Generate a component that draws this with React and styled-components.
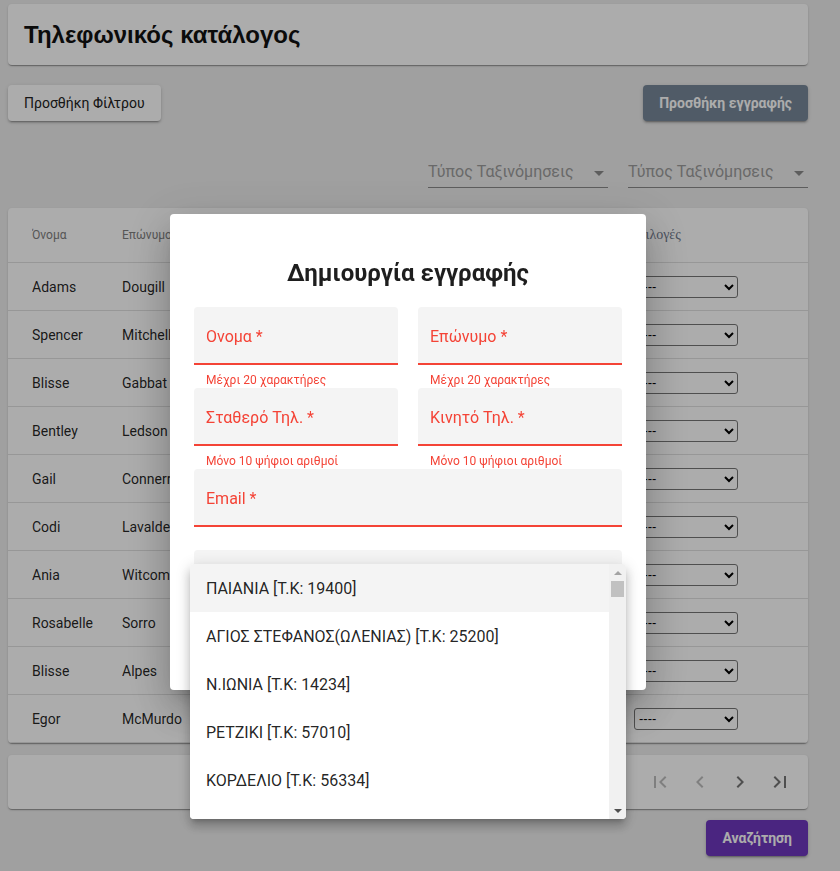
import React from "react";
import styled, { createGlobalStyle } from "styled-components";
import {
  MdArrowDropDown,
  MdFirstPage,
  MdChevronLeft,
  MdChevronRight,
  MdLastPage,
} from "react-icons/md";

const rows = [
  ["Adams", "Dougill", "2101234567", "6971234567", "adougill@mail.gr"],
  ["Spencer", "Mitchell", "2102345678", "6972345678", "smitch@mail.gr"],
  ["Blisse", "Gabbat", "2103456789", "6973456789", "bgabbat@mail.gr"],
  ["Bentley", "Ledson", "2104567890", "6974567890", "bledson@mail.gr"],
  ["Gail", "Connerr", "2105678901", "6975678901", "gconn@mail.gr"],
  ["Codi", "Lavalde", "2106789012", "6976789012", "clav@mail.gr"],
  ["Ania", "Witcombe", "2107890123", "6977890123", "awit@mail.gr"],
  ["Rosabelle", "Sorro", "2108901234", "6978901234", "rsorro@mail.gr"],
  ["Blisse", "Alpes", "2109012345", "6979012345", "balpes@mail.gr"],
  ["Egor", "McMurdo", "2100123456", "6970123456", "emcm@mail.gr"],
];

const places = [
  "ΠΑΙΑΝΙΑ [Τ.Κ: 19400]",
  "ΑΓΙΟΣ ΣΤΕΦΑΝΟΣ(ΩΛΕΝΙΑΣ) [Τ.Κ: 25200]",
  "Ν.ΙΩΝΙΑ [Τ.Κ: 14234]",
  "ΡΕΤΖΙΚΙ [Τ.Κ: 57010]",
  "ΚΟΡΔΕΛΙΟ [Τ.Κ: 56334]",
  "ΚΑΛΑΜΑΡΙΑ [Τ.Κ: 55131]",
  "ΠΕΙΡΑΙΑΣ [Τ.Κ: 18531]",
];

export default function App() {
  return (
    <>
      <GlobalStyle />
      <Page>
        <HeaderCard>
          <Title>Τηλεφωνικός κατάλογος</Title>
        </HeaderCard>

        <Toolbar>
          <Button $variant="light">Προσθήκη Φίλτρου</Button>
          <Button $variant="dark">Προσθήκη εγγραφής</Button>
        </Toolbar>

        <SortRow>
          <SortSelect>
            <select defaultValue="">
              <option value="">Τύπος Ταξινόμησεις</option>
            </select>
            <MdArrowDropDown size={24} />
          </SortSelect>
          <SortSelect>
            <select defaultValue="">
              <option value="">Τύπος Ταξινόμησεις</option>
            </select>
            <MdArrowDropDown size={24} />
          </SortSelect>
        </SortRow>

        <TableCard>
          <HeadRow>
            <HeadCell>Όνομα</HeadCell>
            <HeadCell>Επώνυμο</HeadCell>
            <HeadCell>Σταθερό</HeadCell>
            <HeadCell>Κινητό</HeadCell>
            <HeadCell>Email</HeadCell>
            <HeadCell $serif>Επιλογές</HeadCell>
          </HeadRow>
          {rows.map((r, i) => (
            <Row key={i}>
              <Cell>{r[0]}</Cell>
              <Cell>{r[1]}</Cell>
              <Cell>{r[2]}</Cell>
              <Cell>{r[3]}</Cell>
              <Cell>{r[4]}</Cell>
              <Cell>
                <RowSelect defaultValue="">
                  <option value="">----</option>
                  <option>Επεξεργασία</option>
                  <option>Διαγραφή</option>
                </RowSelect>
              </Cell>
            </Row>
          ))}
        </TableCard>

        <PagerCard>
          <PagerButton $disabled><MdFirstPage size={24} /></PagerButton>
          <PagerButton $disabled><MdChevronLeft size={24} /></PagerButton>
          <PagerButton><MdChevronRight size={24} /></PagerButton>
          <PagerButton><MdLastPage size={24} /></PagerButton>
        </PagerCard>

        <Footer>
          <Button $variant="purple">Αναζήτηση</Button>
        </Footer>
      </Page>

      <Backdrop />

      <Modal>
        <ModalTitle>Δημιουργία εγγραφής</ModalTitle>
        <Form>
          <FieldBlock>
            <Field><Label>Ονομα *</Label></Field>
            <Helper>Μέχρι 20 χαρακτήρες</Helper>
          </FieldBlock>
          <FieldBlock>
            <Field><Label>Επώνυμο *</Label></Field>
            <Helper>Μέχρι 20 χαρακτήρες</Helper>
          </FieldBlock>
          <FieldBlock>
            <Field><Label>Σταθερό Τηλ. *</Label></Field>
            <Helper>Μόνο 10 ψήφιοι αριθμοί</Helper>
          </FieldBlock>
          <FieldBlock>
            <Field><Label>Κινητό Τηλ. *</Label></Field>
            <Helper>Μόνο 10 ψήφιοι αριθμοί</Helper>
          </FieldBlock>
          <FieldBlock $wide>
            <Field><Label>Email *</Label></Field>
            <Helper />
          </FieldBlock>
          <FieldBlock $wide>
            <Field><Label $raised>Διεύθυνση *</Label></Field>
            <Helper />
          </FieldBlock>
        </Form>
      </Modal>

      <Menu>
        <Options>
          {places.map((p, i) => (
            <Option key={p} $selected={i === 0}>{p}</Option>
          ))}
        </Options>
        <Scrollbar>
          <ScrollArrow $dir="up" />
          <Thumb />
          <Track />
          <ScrollArrow $dir="down" />
        </Scrollbar>
      </Menu>
    </>
  );
}

const GlobalStyle = createGlobalStyle`
  html, body {
    margin: 0;
    background: #eeeeee;
  }
  body {
    font-family: Roboto, "Noto Sans", sans-serif;
    color: rgba(0, 0, 0, 0.87);
  }
`;

const Page = styled.div`
  width: 800px;
  margin-left: 8px;
  padding-top: 4px;
  min-height: 867px;
`;

const HeaderCard = styled.div`
  height: 61px;
  display: flex;
  align-items: center;
  padding: 0 16px;
  background: #fff;
  border-radius: 4px;
  box-shadow: 0 2px 1px -1px rgba(0,0,0,.2), 0 1px 1px rgba(0,0,0,.14), 0 1px 3px rgba(0,0,0,.12);
`;

const Title = styled.h1`
  margin: 0;
  font-family: "Liberation Sans", Arial, sans-serif;
  font-size: 24px;
  font-weight: 700;
  color: #111;
`;

const Toolbar = styled.div`
  display: flex;
  justify-content: space-between;
  margin-top: 20px;
`;

const variants = {
  light: "background: #fff; color: #222; font-weight: 400;",
  dark: "background: #778899; color: #fff; font-weight: 700;",
  purple: "background: #6e37be; color: #fff; font-weight: 700;",
};

const Button = styled.button`
  height: 36px;
  padding: 0 16px;
  border: none;
  border-radius: 4px;
  font-family: Roboto, sans-serif;
  font-size: 14px;
  box-shadow: 0 3px 1px -2px rgba(0,0,0,.2), 0 2px 2px rgba(0,0,0,.14), 0 1px 5px rgba(0,0,0,.12);
  ${(p) => variants[p.$variant]}
`;

const SortRow = styled.div`
  display: flex;
  justify-content: flex-end;
  gap: 20px;
  margin-top: 37px;
`;

const SortSelect = styled.div`
  width: 180px;
  height: 29px;
  display: flex;
  align-items: center;
  border-bottom: 1px solid #8a8a8a;
  color: #8a8a8a;
  select {
    flex: 1;
    appearance: none;
    border: none;
    background: transparent;
    font-family: Roboto, sans-serif;
    font-size: 16px;
    color: #9c9c9c;
    padding: 0 0 2px;
    outline: none;
  }
  svg {
    margin-right: -3px;
  }
`;

const TableCard = styled.div`
  margin-top: 20px;
  background: #fff;
  border-radius: 4px;
  overflow: hidden;
  box-shadow: 0 2px 1px -1px rgba(0,0,0,.2), 0 1px 1px rgba(0,0,0,.14), 0 1px 3px rgba(0,0,0,.12);
`;

const grid = `
  display: grid;
  grid-template-columns: 90px 90px 110px 110px 1fr 174px;
  padding-left: 24px;
  align-items: center;
  border-bottom: 1px solid #e0e0e0;
`;

const HeadRow = styled.div`
  ${grid}
  height: 54px;
`;

const HeadCell = styled.div`
  font-size: ${(p) => (p.$serif ? "14px" : "12px")};
  font-family: ${(p) => (p.$serif ? '"Liberation Serif", serif' : "Roboto, sans-serif")};
  color: ${(p) => (p.$serif ? "#707a8c" : "#808080")};
  margin-left: ${(p) => (p.$serif ? "-4px" : "0")};
  white-space: nowrap;
  overflow: hidden;
`;

const Row = styled.div`
  ${grid}
  height: 47px;
`;

const Cell = styled.div`
  font-size: 14px;
  white-space: nowrap;
  overflow: hidden;
`;

const RowSelect = styled.select`
  width: 104px;
  height: 22px;
  font-size: 13px;
  border: 1px solid #767676;
  border-radius: 3px;
  background: transparent;
  color: #000;
`;

const PagerCard = styled.div`
  margin-top: 12px;
  height: 54px;
  display: flex;
  justify-content: flex-end;
  align-items: center;
  padding-right: 8px;
  background: #fff;
  border-radius: 4px;
  box-shadow: 0 2px 1px -1px rgba(0,0,0,.2), 0 1px 1px rgba(0,0,0,.14), 0 1px 3px rgba(0,0,0,.12);
`;

const PagerButton = styled.button`
  width: 40px;
  height: 40px;
  display: flex;
  align-items: center;
  justify-content: center;
  padding: 0;
  border: none;
  background: transparent;
  color: ${(p) => (p.$disabled ? "rgba(0,0,0,0.26)" : "rgba(0,0,0,0.54)")};
`;

const Footer = styled.div`
  display: flex;
  justify-content: flex-end;
  margin-top: 11px;
`;

const Backdrop = styled.div`
  position: fixed;
  inset: 0;
  background: rgba(0, 0, 0, 0.325);
  z-index: 10;
`;

const Modal = styled.div`
  position: fixed;
  top: 214px;
  left: 170px;
  width: 476px;
  height: 476px;
  box-sizing: border-box;
  padding: 46px 24px 0;
  background: #fff;
  border-radius: 4px;
  z-index: 20;
  box-shadow: 0 11px 15px -7px rgba(0,0,0,.2), 0 24px 38px 3px rgba(0,0,0,.14), 0 9px 46px 8px rgba(0,0,0,.12);
`;

const ModalTitle = styled.h2`
  margin: 0 0 21px;
  text-align: center;
  font-family: Roboto, sans-serif;
  font-size: 24px;
  line-height: 26px;
  font-weight: 700;
  color: #1e1e1e;
`;

const Form = styled.div`
  display: grid;
  grid-template-columns: 1fr 1fr;
  column-gap: 20px;
`;

const FieldBlock = styled.div`
  grid-column: ${(p) => (p.$wide ? "1 / span 2" : "auto")};
  height: 81px;
`;

const Field = styled.div`
  height: 56px;
  box-sizing: content-box;
  background: #f4f4f4;
  border-radius: 4px 4px 0 0;
  border-bottom: 2px solid #f44336;
  padding: 0 12px;
`;

const Label = styled.div`
  padding-top: ${(p) => (p.$raised ? "12px" : "20px")};
  line-height: 20px;
  font-size: 16px;
  color: #f44336;
`;

const Helper = styled.div`
  padding: 6px 12px 0;
  line-height: 19px;
  font-size: 12px;
  color: #f44336;
`;

const Menu = styled.div`
  position: fixed;
  top: 564px;
  left: 190px;
  width: 436px;
  height: 255px;
  display: flex;
  background: #fff;
  border-radius: 4px;
  overflow: hidden;
  z-index: 30;
  box-shadow: 0 5px 5px -3px rgba(0,0,0,.2), 0 8px 10px 1px rgba(0,0,0,.14), 0 3px 14px 2px rgba(0,0,0,.12);
`;

const Options = styled.div`
  flex: 1;
  overflow: hidden;
`;

const Option = styled.div`
  height: 48px;
  display: flex;
  align-items: center;
  padding: 0 16px;
  font-size: 16px;
  color: rgba(0, 0, 0, 0.87);
  white-space: nowrap;
  background: ${(p) => (p.$selected ? "#f4f4f4" : "#fff")};
`;

const Scrollbar = styled.div`
  width: 17px;
  display: flex;
  flex-direction: column;
  background: #f1f1f1;
`;

const ScrollArrow = styled.div`
  height: 17px;
  display: flex;
  align-items: center;
  justify-content: center;
  &::before {
    content: "";
    border-left: 4px solid transparent;
    border-right: 4px solid transparent;
    ${(p) =>
      p.$dir === "up"
        ? "border-bottom: 4px solid #a3a3a3;"
        : "border-top: 4px solid #505050;"}
  }
`;

const Thumb = styled.div`
  height: 16px;
  margin: 0 2px;
  background: #c1c1c1;
`;

const Track = styled.div`
  flex: 1;
`;
